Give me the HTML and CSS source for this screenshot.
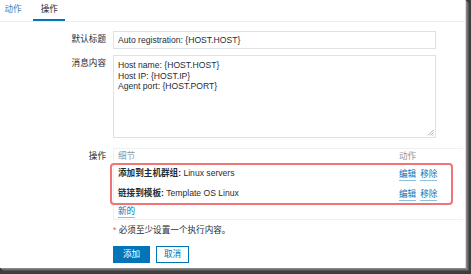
FILE: index.html
```html
<!DOCTYPE html>
<html lang="zh">
<head>
<meta charset="utf-8">
<link rel="stylesheet" href="styles.css">
</head>
<body>
<div class="page">
  <div class="tabs">
    <span class="tab">动作</span>
    <span class="tab active">操作</span>
  </div>
  <div class="form">
    <div class="row row-subject">
      <div class="label">默认标题</div>
      <div class="field"><div class="input">Auto registration: {HOST.HOST}</div></div>
    </div>
    <div class="row row-message">
      <div class="label">消息内容</div>
      <div class="field">
        <div class="textarea">Host name: {HOST.HOST}<br>Host IP: {HOST.IP}<br>Agent port: {HOST.PORT}
          <svg class="grip" width="7" height="7" viewBox="0 0 7 7"><path d="M6.5 1 L1 6.5 M6.5 3.5 L3.5 6.5 M6.5 5.5 L5.5 6.5" stroke="#9aa3a8" stroke-width="0.8" fill="none"/></svg>
        </div>
      </div>
    </div>
    <div class="row row-ops">
      <div class="label">操作</div>
      <div class="field">
        <div class="ops">
          <div class="ops-head"><span>细节</span><span>动作</span></div>
          <div class="mark">
            <div class="op-row op-first">
              <span><b>添加到主机群组:</b> Linux servers</span>
              <span class="actions"><a class="link">编辑</a><a class="link">移除</a></span>
            </div>
            <div class="op-row">
              <span><b>链接到模板:</b> Template OS Linux</span>
              <span class="actions"><a class="link">编辑</a><a class="link">移除</a></span>
            </div>
          </div>
          <div class="ops-new"><a class="link">新的</a></div>
        </div>
      </div>
    </div>
    <div class="row row-note">
      <div class="label"></div>
      <div class="field note"><span class="req">*</span> 必须至少设置一个执行内容。</div>
    </div>
    <div class="row row-buttons">
      <div class="label"></div>
      <div class="field buttons">
        <span class="btn btn-primary">添加</span>
        <span class="btn btn-alt">取消</span>
      </div>
    </div>
  </div>
</div>
</body>
</html>
```

FILE: styles.css
```css
html, body {
  margin: 0;
  padding: 0;
}
body {
  width: 471px;
  height: 274px;
  background: #3e3e3e;
  font-family: "Liberation Sans", "Noto Sans CJK SC", sans-serif;
  font-size: 8.6px;
  color: #1f2c33;
  overflow: hidden;
}
.page {
  width: 466px;
  height: 268px;
  background: #fff;
  box-sizing: border-box;
  border-right: 1px solid #dcdcdc;
  box-shadow: 1px 1px 0 #8a8a8a, 2px 2px 0 #6e6e6e, 3px 3px 0 #585858;
  overflow: hidden;
}
.tabs {
  display: flex;
  height: 21px;
  border-bottom: 1px solid #ebeef0;
  padding-left: 0;
  margin-left: -3px;
}
.tab {
  box-sizing: border-box;
  height: 21px;
  line-height: 19px;
  padding: 0 7.5px;
  color: #3f83b5;
}
.tab.active {
  color: #1f2c33;
  border-bottom: 2px solid #0275b8;
  margin-left: 4px;
}
.form {
  padding-top: 9px;
}
.row {
  display: grid;
  grid-template-columns: 106px 323px;
  column-gap: 7px;
}
.label {
  text-align: right;
  line-height: 17px;
}
.row-subject { margin-bottom: 6px; }
.row-message { margin-bottom: 10px; }
.row-message .label { line-height: 16px; }
.input {
  box-sizing: border-box;
  height: 18px;
  line-height: 16px;
  border: 1px solid #dce2e5;
  padding: 0 4px;
}
.textarea {
  position: relative;
  box-sizing: border-box;
  height: 83px;
  border: 1px solid #dce2e5;
  padding: 4px 4px;
  line-height: 10.5px;
}
.grip {
  position: absolute;
  right: 1px;
  bottom: 1px;
}
.row-ops {
  grid-template-columns: 106px 350px;
}
.ops {
  box-sizing: border-box;
  border: 1px solid #eef0f1;
  border-right: none;
}
.ops-head {
  display: grid;
  grid-template-columns: 1fr 64px;
  padding: 1px 0 0 4px;
  line-height: 13px;
  color: #8a9ba5;
}
.mark {
  margin: 0 10px 0 -4px;
  border: 2px solid #f27373;
  border-radius: 4px;
  padding: 0 0 1px 6px;
}
.op-row {
  display: grid;
  grid-template-columns: 1fr 52px;
  line-height: 17px;
}
.op-first { margin-bottom: 3px; }
.op-row b { font-weight: bold; }
.actions {
  display: flex;
  gap: 4px;
}
.link {
  color: #0275b8;
  border-bottom: 1px solid #8ec0e0;
  line-height: 10px;
  align-self: center;
  display: inline-block;
}
.actions .link { margin-top: 3px; height: 11px; }
.ops-new {
  padding: 0 0 2px 4px;
  line-height: 12px;
  height: 12px;
}
.ops-new .link { line-height: 11px; }
.row-note { margin-top: 4px; }
.note {
  line-height: 12px;
}
.req {
  color: #e45959;
}
.row-buttons { margin-top: 10px; }
.buttons {
  display: flex;
  gap: 6px;
}
.btn {
  box-sizing: border-box;
  height: 17px;
  line-height: 15px;
  text-align: center;
  border: 1px solid #0275b8;
}
.btn-primary {
  width: 37px;
  background: #0275b8;
  color: #fff;
}
.btn-alt {
  width: 33px;
  background: #fff;
  color: #0275b8;
}
```
